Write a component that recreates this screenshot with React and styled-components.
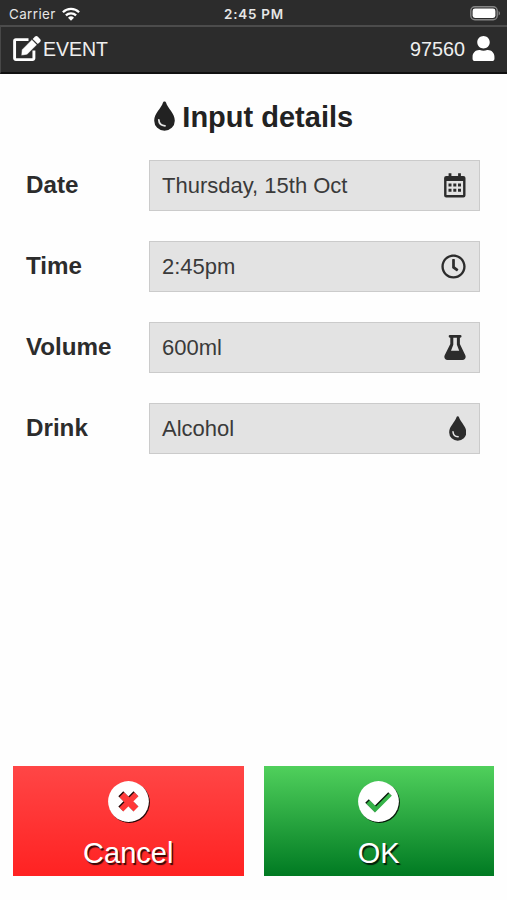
import React from 'react';
import styled, {createGlobalStyle} from 'styled-components';
import {FaRegClock, FaUser} from 'react-icons/fa';

const GlobalStyle = createGlobalStyle`
  * {
    box-sizing: border-box;
  }
  body {
    margin: 0;
    background: #fff;
    font-family: 'Liberation Sans', Arial, sans-serif;
  }
`;

const Screen = styled.div`
  display: flex;
  flex-direction: column;
  height: 900px;
  overflow: hidden;
  background: #fefefe;
`;

const StatusBar = styled.div`
  display: grid;
  grid-template-columns: 1fr auto 1fr;
  align-items: center;
  height: 25px;
  padding: 2px 6px 0 9px;
  background: #2c2c2c;
  color: #e6e6e6;
  font-family: Inter, sans-serif;
  font-size: 13.4px;
  line-height: 16px;
`;

const Carrier = styled.div`
  display: flex;
  align-items: center;
  gap: 6px;
  letter-spacing: 0.4px;
`;

const Clock = styled.div`
  padding-right: 2px;
  font-weight: 600;
  letter-spacing: 0.8px;
`;

const Battery = styled.svg`
  justify-self: end;
`;

const Header = styled.header`
  display: flex;
  align-items: center;
  justify-content: space-between;
  height: 49px;
  padding: 0 11px 1px 12px;
  border-top: 2px solid #4c4c4c;
  border-left: 1px solid #484848;
  border-bottom: 2px solid #101010;
  background: #2c2c2c;
  color: #fff;
`;

const HeaderItem = styled.div`
  display: flex;
  align-items: center;
  gap: ${props => props.$gap}px;
  color: #efefef;
  font-size: ${props => props.$size}px;
  line-height: 24px;

  svg {
    margin-bottom: 1px;
    color: #fff;
  }
`;

const Title = styled.h1`
  display: flex;
  align-items: center;
  justify-content: center;
  gap: 7.5px;
  height: 34px;
  margin: 26px 0 0;
  color: #222;
  font-size: 29px;
  line-height: 34px;

  svg {
    margin-bottom: 3px;
  }
`;

const Form = styled.div`
  display: flex;
  flex-direction: column;
  gap: 30px;
  padding: 26px 27px 0 26px;
`;

const Row = styled.div`
  display: grid;
  grid-template-columns: 123px 1fr;
  align-items: center;
  height: 51px;
`;

const Label = styled.label`
  padding-bottom: 2px;
  color: #2c2c2c;
  font-size: 24.2px;
  font-weight: bold;
`;

const Field = styled.div`
  display: flex;
  align-items: center;
  justify-content: space-between;
  height: 51px;
  padding: 0 13px 0 12px;
  border: 1px solid #cbcbcb;
  background: #e3e3e3;
  color: #3a3a3a;
  font-size: 22px;

  svg {
    margin-bottom: 1px;
    color: #2c2c2c;
  }
`;

const Actions = styled.div`
  display: grid;
  grid-template-columns: 1fr 1fr;
  gap: 20px;
  margin-top: auto;
  padding: 0 13px 24px;
`;

const ActionButton = styled.button`
  display: flex;
  flex-direction: column;
  align-items: center;
  height: 110px;
  padding: 15px 0 0;
  border: 0;
  background: linear-gradient(${props => props.$from}, ${props => props.$to});
  color: #fff;
  font-family: inherit;
  font-size: 29px;
  line-height: 34px;
  text-shadow: 1.5px 1.5px 1px rgba(0, 0, 0, 0.8);

  svg {
    margin-bottom: 14px;
    overflow: visible;
    filter: drop-shadow(1.5px 1.5px 0.5px rgba(0, 0, 0, 0.85));
  }
`;

const WifiIcon = () => (
  <svg width="18" height="14" viewBox="0 0 18 14" fill="none" stroke="#fff" strokeWidth="2.3">
    <path d="M0.9 5.2a11.6 11.6 0 0 1 16.2 0" />
    <path d="M3.9 8.4a7.3 7.3 0 0 1 10.2 0" />
    <path d="M9 13.8L6 10.7a4.3 4.3 0 0 1 6 0z" fill="#fff" stroke="none" />
  </svg>
);

const BatteryIcon = () => (
  <Battery width="31" height="15" viewBox="0 0 31 15">
    <rect x="0.8" y="0.8" width="26.4" height="13" rx="4" fill="none" stroke="#858585" strokeWidth="1.4" />
    <rect x="2.6" y="2.6" width="22.8" height="9.4" rx="2.4" fill="#fff" />
    <path d="M28.6 5v4.6c1.9-0.8 1.9-3.8 0-4.6z" fill="#858585" />
  </Battery>
);

const EditIcon = () => (
  <svg width="28" height="26" viewBox="0 0 28 26" fill="currentColor">
    <path
      d="M15.5 3.6H2.9a1.3 1.3 0 0 0-1.3 1.3v17.4a1.3 1.3 0 0 0 1.3 1.3h16.7a1.3 1.3 0 0 0 1.3-1.3V14.5"
      fill="none"
      stroke="currentColor"
      strokeWidth="2.9"
    />
    <path d="M8.2 19.5L8.8 13.7L18.9 3.6L24 8.7L13.9 18.8z" stroke="#2c2c2c" strokeWidth="0.4" />
    <path d="M19.7 2.9L21.8 0.8a2.2 2.2 0 0 1 3.1 0L27 2.9a2.2 2.2 0 0 1 0 3.1L24.8 8z" />
  </svg>
);

const DropIcon = ({height}) => (
  <svg width={height * 0.7} height={height} viewBox="0 0 21 30">
    <path
      d="M10.5 0.4c0.8 0 1.3 0.5 1.5 1.2C13.7 7.6 20.8 12.4 20.8 19.7a10.3 10 0 0 1-20.6 0C0.2 12.4 7.3 7.6 9 1.6c0.2-0.7 0.7-1.2 1.5-1.2z"
      fill="currentColor"
    />
    <path d="M4.8 18.8c0.2 3.6 2.6 5.9 6.2 6" fill="none" stroke="#e6e6e6" strokeWidth="1.8" strokeLinecap="round" />
  </svg>
);

const CalendarIcon = () => (
  <svg width="22" height="25" viewBox="0 0 22 25" fill="currentColor">
    <path d="M4.6 0.3h2.8v4H4.6zM14.1 0.3h2.8v4h-2.8z" />
    <path
      fillRule="evenodd"
      d="M2.2 3h17.2a2.1 2.1 0 0 1 2.1 2.1v17.3a2.1 2.1 0 0 1-2.1 2.1H2.2a2.1 2.1 0 0 1-2.1-2.1V5.1A2.1 2.1 0 0 1 2.2 3zM2.5 8v14.1h16.6V8z"
    />
    <path d="M4.5 10.6h3v3H4.5zM9.3 10.6h3v3H9.3zM14 10.6h3v3H14zM4.5 15.7h3v3H4.5zM9.3 15.7h3v3H9.3zM14 15.7h3v3H14z" />
  </svg>
);

const FlaskIcon = () => (
  <svg width="22" height="25" viewBox="0 0 22 25" fill="currentColor">
    <path
      fillRule="evenodd"
      d="M6 0h10.2a1.3 1.3 0 0 1 0 2.7H15.9V9L21.3 20.2c1 2.2-0.2 4.8-2.8 4.8H3.5C0.9 25-0.3 22.4 0.7 20.2L6.3 9V2.7H6A1.3 1.3 0 0 1 6 0zM9.3 2.7V9.7L7 15.7H15.2L12.9 9.7V2.7z"
    />
  </svg>
);

// white disc with the glyph punched out, so the button gradient shows through
const DiscIcon = ({id, d, strokeWidth}) => (
  <svg width="41" height="41" viewBox="0 0 41 41">
    <mask id={id}>
      <rect width="41" height="41" fill="#fff" />
      <path d={d} fill="none" stroke="#000" strokeWidth={strokeWidth} />
    </mask>
    <circle cx="20.5" cy="20.5" r="20.4" fill="#fff" mask={`url(#${id})`} />
  </svg>
);

const FIELDS = [
  {label: 'Date', value: 'Thursday, 15th Oct', icon: <CalendarIcon />},
  {label: 'Time', value: '2:45pm', icon: <FaRegClock size={25} />},
  {label: 'Volume', value: '600ml', icon: <FlaskIcon />},
  {label: 'Drink', value: 'Alcohol', icon: <DropIcon height={25} />}
];

export default function App() {
  return (
    <Screen>
      <GlobalStyle />
      <StatusBar>
        <Carrier>
          Carrier
          <WifiIcon />
        </Carrier>
        <Clock>2:45 PM</Clock>
        <BatteryIcon />
      </StatusBar>
      <Header>
        <HeaderItem $gap={2} $size={19.5}>
          <EditIcon />
          EVENT
        </HeaderItem>
        <HeaderItem $gap={6} $size={19.8}>
          97560
          <FaUser size={25} />
        </HeaderItem>
      </Header>
      <Title>
        <DropIcon height={30} />
        Input details
      </Title>
      <Form>
        {FIELDS.map(({label, value, icon}) => (
          <Row key={label}>
            <Label>{label}</Label>
            <Field>
              {value}
              {icon}
            </Field>
          </Row>
        ))}
      </Form>
      <Actions>
        <ActionButton $from="#ff4646" $to="#ff2222">
          <DiscIcon id="cancel-disc" d="M12.8 12.8L28 28M28 12.8L12.8 28" strokeWidth={7} />
          Cancel
        </ActionButton>
        <ActionButton $from="#50d05c" $to="#007a22">
          <DiscIcon id="ok-disc" d="M9 20L17 28L32 13" strokeWidth={5} />
          OK
        </ActionButton>
      </Actions>
    </Screen>
  );
}
